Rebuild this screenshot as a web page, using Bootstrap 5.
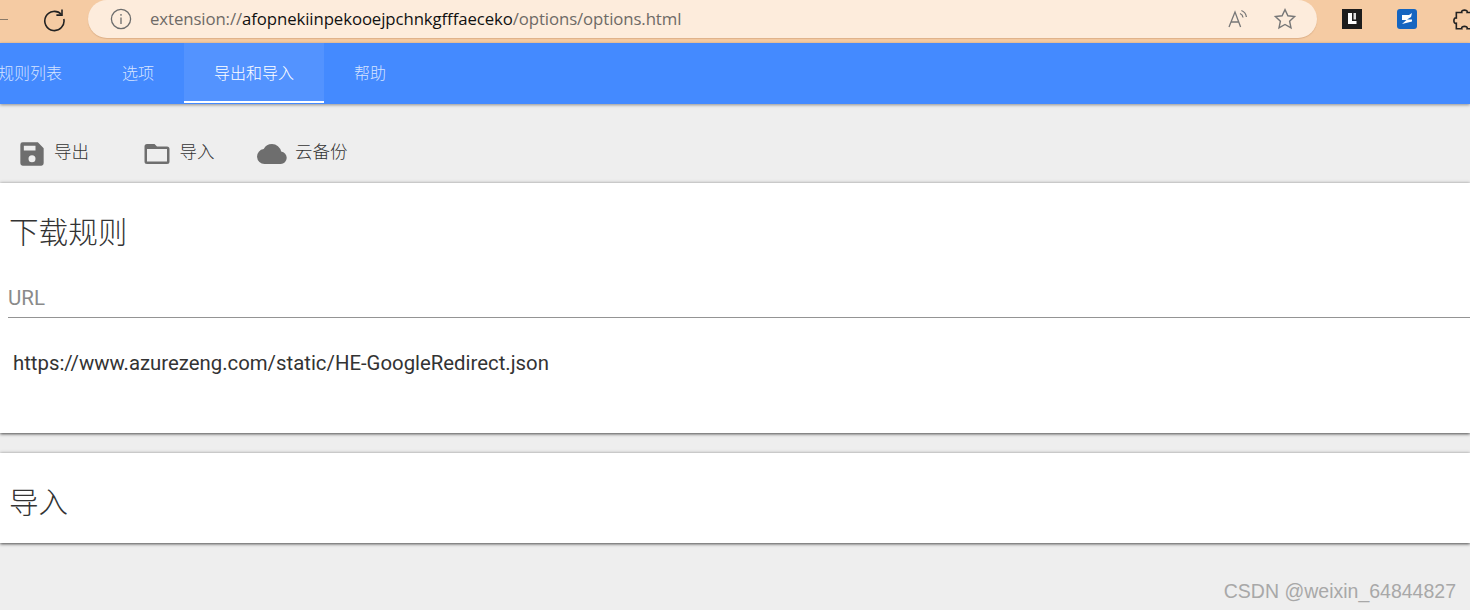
<!DOCTYPE html>
<html lang="zh-CN">
<head>
    <meta charset="UTF-8" />
    <meta name="viewport" content="width=device-width, initial-scale=1.0" />
    <title>Options</title>
    <link href="https://cdn.jsdelivr.net/npm/bootstrap@5.3.2/dist/css/bootstrap.min.css" rel="stylesheet" />
    <style>
        html, body { height: 610px; overflow: hidden; }
        body { background: #eeeeee; font-family: Roboto, "Noto Sans CJK SC", sans-serif; color: #333; }
        .browser-bar { height: 43px; background: #f5cba3; }
        .back-dash { width: 8px; height: 1px; background: #8a7a68; margin-right: 33px; margin-top: -4px; }
        .reload-icon { margin-top: -5px; }
        .url-pill { width: 1229px; height: 38px; background: #fdecdc; border-radius: 19px; margin-top: -5px; margin-left: 21px; padding: 0 20px 0 22px; box-shadow: 0 1px 1px rgba(150,100,60,.25); }
        .url-text { font-family: "Open Sans", "Liberation Sans", sans-serif; font-size: 16.8px; letter-spacing: -.1px; color: #6e6a66; margin-left: 18px; white-space: nowrap; }
        .url-text b { font-weight: 400; color: #111; }
        .ext-icons { margin-left: 25px; gap: 35px; margin-top: -5px; }
        .tab-bar { height: 61px; background: #448aff; box-shadow: 0 1px 3px rgba(0,0,0,.4); }
        .tab-link { font-size: 16px; font-weight: 300; color: rgba(255,255,255,.78); padding: 0 30px; height: 60px; line-height: 61px; display: block; }
        .tab-link:first-child { margin-left: -32px; }
        .tab-active { color: #fff; background: #5393ff; border-bottom: 2px solid #fff; height: 60px; }
        .tool-row { height: 79px; padding: 20px 0 0 18px; }
        .tool-btn { font-size: 17.5px; font-weight: 300; color: #333; gap: 8px; white-space: nowrap; }
        .tool-btn span { padding-bottom: 3px; }
        .tool-save { width: 123.5px; }
        .tool-open { width: 115.5px; }
        .panel { background: #fff; box-shadow: 0 -2px 3px rgba(0,0,0,.05), 0 1px 3px rgba(0,0,0,.7); }
        .panel-rules { height: 250px; padding: 27px 0 0 9px; }
        .panel-import { height: 90px; margin-top: 20px; padding: 27px 0 0 9px; }
        .panel-title { font-family: "Noto Sans CJK SC", sans-serif; font-weight: 300; font-size: 29.6px; line-height: 42px; color: #333; margin: 0; }
        .url-field { margin: 17px 0 0 -1px; height: 49px; border-bottom: 1px solid #949494; font-size: 20.5px; line-height: 27px; padding-top: 16px; color: #8a8a8a; }
        .url-value { font-size: 20.35px; line-height: 28px; color: #333; margin: 31px 0 0 4px; }
        .mark-text { font-family: "Liberation Sans", sans-serif; font-size: 19.5px; color: #a8a8a8; text-align: right; padding: 36px 14px 0 0; line-height: 24px; }
    </style>
</head>
<body>
<div class="browser-bar d-flex align-items-center overflow-hidden">
    <div class="back-dash flex-shrink-0"></div>
    <svg class="reload-icon flex-shrink-0" width="26" height="26" viewBox="0 0 26 26" fill="none" stroke="#222" stroke-width="1.6"><path d="M20.5 8.5A9.6 9.6 0 1 0 22.8 13"/><path d="M21 3.5v5.600h-5.600"/></svg>
    <div class="url-pill d-flex align-items-center flex-shrink-0">
        <svg width="22" height="22" viewBox="0 0 22 22" fill="none" stroke="#6c6c6c" stroke-width="1.3"><circle cx="11" cy="11" r="9.6"/><path d="M11 9.500v6.500M11 6v1.800"/></svg>
        <span class="url-text">extension://<b>afopnekiinpekooejpchnkgfffaeceko</b>/options/options.html</span>
        <div class="ms-auto d-flex align-items-center gap-4">
            <svg width="22" height="22" viewBox="0 0 22 22" fill="none" stroke="#777" stroke-width="1.3"><path d="M2 19 8 4l5.600 15M4.300 14h7.200"/><path d="M13 5.500a5 5 0 0 1 3 4M14.400 2.500a8 8 0 0 1 5 6.500"/></svg>
            <svg width="24" height="24" viewBox="0 0 24 24" fill="none" stroke="#777" stroke-width="1.4"><path d="m12 2.600 2.900 6.200 6.700.8-5 4.600 1.400 6.700-6-3.400-6 3.400 1.400-6.700-5-4.600 6.700-.8z"/></svg>
        </div>
    </div>
    <div class="ext-icons d-flex align-items-center flex-shrink-0">
        <svg class="flex-shrink-0" width="20" height="20" viewBox="0 0 20 20"><rect width="20" height="20" fill="#1d1d1d"/><path d="M6 4h4v8h4.500v3H6z" fill="#fff"/><path d="M11.500 4h2.500v6.500h-2.500z" fill="#ddd"/></svg>
        <svg class="flex-shrink-0" width="20" height="20" viewBox="0 0 20 20"><rect width="20" height="20" rx="3" fill="#1565c0"/><path d="M5 6h7l3-2-1 4-4 2.500h5v2l-10 2.500 4.500-4H5z" fill="#fff"/></svg>
        <svg class="flex-shrink-0" width="26" height="26" viewBox="0 0 24 24" fill="none" stroke="#222" stroke-width="1.5"><path d="M4 6h5c-.8-3 5.800-3 5 0h5v5c3-.8 3 5.800 0 5v5h-5c.8-3-5.800-3-5 0H4v-5c-3 .8-3-5.800 0-5z"/></svg>
    </div>
</div>

<nav class="tab-bar d-flex">
    <a class="tab-link text-decoration-none">规则列表</a>
    <a class="tab-link text-decoration-none">选项</a>
    <a class="tab-link tab-active text-decoration-none">导出和导入</a>
    <a class="tab-link text-decoration-none">帮助</a>
</nav>

<div class="tool-row d-flex align-items-center">
    <div class="tool-btn tool-save d-flex align-items-center">
        <svg width="28" height="28" viewBox="0 0 24 24" fill="#6e6e6e"><path d="M17 2H4a2 2 0 0 0-2 2v16a2 2 0 0 0 2 2h16a2 2 0 0 0 2-2V7zm-5 17a3 3 0 1 1 0-6 3 3 0 0 1 0 6zm3-10H5V5h10z"/></svg>
        <span>导出</span>
    </div>
    <div class="tool-btn tool-open d-flex align-items-center">
        <svg width="30" height="30" viewBox="0 0 24 24" fill="#6e6e6e"><path d="M20 6h-8l-2-2H4a2 2 0 0 0-2 2v12a2 2 0 0 0 2 2h16a2 2 0 0 0 2-2V8a2 2 0 0 0-2-2zm0 12H4V8h16z"/></svg>
        <span>导入</span>
    </div>
    <div class="tool-btn d-flex align-items-center">
        <svg width="30" height="30" viewBox="0 0 24 24" fill="#6e6e6e"><path d="M19.350 10.040A7.490 7.490 0 0 0 12 4a7.500 7.500 0 0 0-6.650 4.040A6 6 0 0 0 6 20h13a5 5 0 0 0 .35-9.960z"/></svg>
        <span>云备份</span>
    </div>
</div>

<section class="panel panel-rules">
    <h2 class="panel-title">下载规则</h2>
    <div class="url-field">URL</div>
    <div class="url-value">https://www.azurezeng.com/static/HE-GoogleRedirect.json</div>
</section>

<section class="panel panel-import">
    <h2 class="panel-title">导入</h2>
</section>

<div class="mark-text">CSDN @weixin_64844827</div>

<script src="https://cdn.jsdelivr.net/npm/bootstrap@5.3.2/dist/js/bootstrap.bundle.min.js"></script>
</body>
</html>
